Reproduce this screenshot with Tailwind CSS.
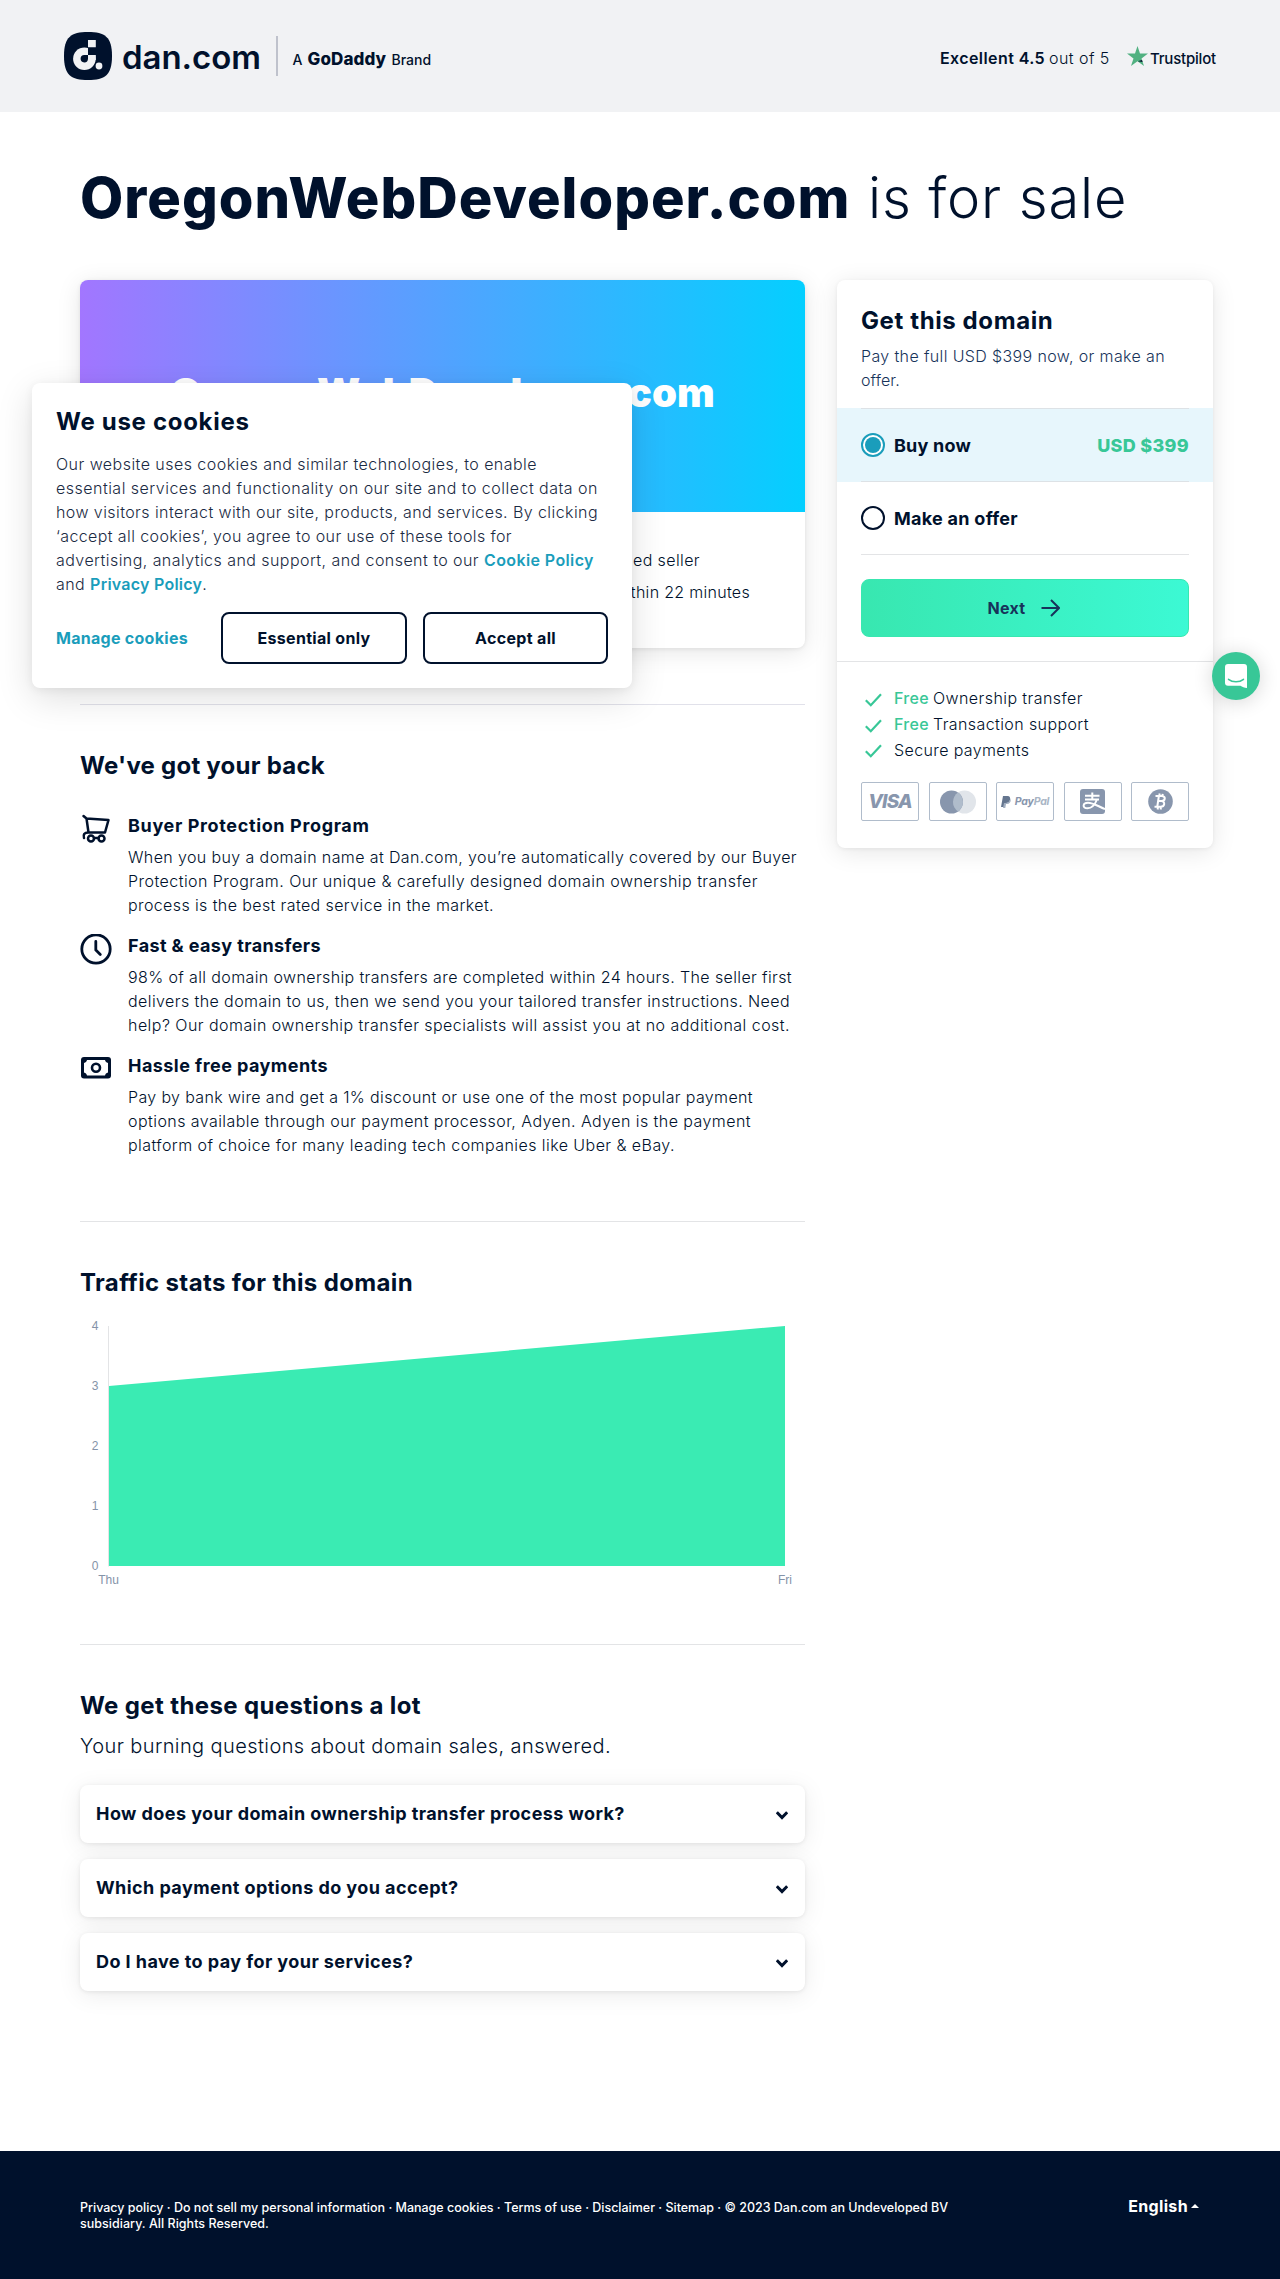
<!DOCTYPE html>
<html lang="en">
<head>
<meta charset="utf-8">
<title>OregonWebDeveloper.com is for sale</title>
<script src="https://cdn.jsdelivr.net/npm/@tailwindcss/browser@4"></script>
</head>
<body class="relative w-[1280px] bg-white font-['Inter',sans-serif] text-[#00112c]">

<header class="flex h-28 items-center justify-between bg-[#f1f2f4] pl-16 pr-[63px]">
  <div class="flex h-12 items-center">
    <svg class="size-12 shrink-0" viewBox="0 0 48 48">
      <path d="M24 0C41 0 48 5 48 24S41 48 24 48 0 43 0 24 7 0 24 0Z" fill="#00112c"/>
      <circle cx="20.4" cy="26.7" r="11.3" fill="#f1f2f4"/>
      <path d="M24 8h7.8v7.5H24z" fill="#f1f2f4"/>
      <path d="M24 15.5h8V23h-8z" fill="#00112c"/>
      <path d="M24 23h7.8v5H24z" fill="#f1f2f4"/>
      <path d="M20.4 23H24v3.8a3.7 3.7 0 1 1-3.6-3.8Z" fill="#00112c"/>
      <circle cx="35" cy="34" r="4.6" fill="#00112c"/>
      <circle cx="35" cy="34" r="3.4" fill="#f1f2f4"/>
    </svg>
    <span class="ml-[10px] mt-[2px] w-[154px] whitespace-nowrap text-[33px] leading-[48px] font-semibold tracking-[-0.05px]">dan.com</span>
    <span class="-mt-px h-10 w-[1.5px] bg-[#bfc2cc]"></span>
    <span class="ml-[15px] mt-[6px] flex items-baseline whitespace-nowrap leading-6">
      <span class="w-[15px] text-[14px] font-medium">A</span>
      <span class="w-[84px] text-[17px] font-extrabold tracking-[0.1px]">GoDaddy</span>
      <span class="text-[14px] font-medium">Brand</span>
    </span>
  </div>
  <div class="mt-1 flex items-center whitespace-nowrap leading-6">
    <span class="w-[109px] font-semibold tracking-[0.41px]">Excellent 4.5</span>
    <span class="w-[78px] font-light tracking-[0.45px]">out of 5</span>
    <svg class="-mt-1 mr-[2px] size-[21px]" viewBox="0 0 21 21">
      <path d="M10.5 0l2.5 7.6H21l-6.5 4.8L17 20l-6.500-4.700L4 20l2.500-7.600L0 7.600h8z" fill="#51b181"/>
      <path d="M15 14l.6 1.900-4.800-.6z" fill="#00112c"/>
    </svg>
    <span class="mt-px w-[67px] text-[15px] font-medium tracking-[-0.2px]">Trustpilot</span>
  </div>
</header>

<main class="px-20 pt-[54px]">
  <h1 class="flex whitespace-nowrap text-[56px] leading-[64px]">
    <span class="w-[788px] font-extrabold tracking-[1.03px]">OregonWebDeveloper.com</span>
    <span class="font-light tracking-[0.85px]">is for sale</span>
  </h1>

  <div class="mt-[50px] flex items-start">
    <div class="w-[725px] shrink-0">
      <section class="h-[368px] overflow-hidden rounded-lg shadow-[0_4px_24px_rgba(0,0,0,0.10),0_1px_4px_rgba(0,0,0,0.08)]">
        <div class="flex h-[232px] items-center justify-center bg-linear-to-r/srgb from-[#a276ff] to-[#04cfff] pb-[6px] text-[40px] leading-[48px] font-black tracking-[0.1px] text-white">OregonWebDeveloper.com</div>
        <div class="pt-9 text-right font-light leading-6">
          <p class="w-[620px] tracking-[0.4px]">Dan.com verified seller</p>
          <p class="mt-2 w-[670px] tracking-[0.3px]">Responds within 22 minutes</p>
        </div>
      </section>

      <section class="mt-14 border-t border-[#e1e1ea] pt-[45px]">
        <h2 class="text-2xl font-bold tracking-[0.24px]">We've got your back</h2>
        <div class="mt-8 flex flex-col gap-[17px] whitespace-nowrap text-base font-light">
          <div class="flex">
            <svg class="w-8 shrink-0 mr-4 h-8" viewBox="0 0 32 32" fill="none" stroke="#00112c" stroke-width="2.500" stroke-linejoin="round" stroke-linecap="round">
              <path d="M3.500 2l3 2.500L28.500 6 25 18.500H8.500L6.500 4.500M8.500 18.500c-4.500 0-5.500 2-4.500 5.500"/>
              <circle cx="11" cy="24.500" r="3"/><circle cx="21.500" cy="24.500" r="3"/><path d="M14 24h4.500"/>
            </svg>
            <div>
              <h3 class="text-lg leading-6 font-bold tracking-[0.64px]">Buyer Protection Program</h3>
              <p class="mt-[7px] tracking-[0.387px]">When you buy a domain name at Dan.com, you’re automatically covered by our Buyer</p>
              <p class="tracking-[0.462px]">Protection Program. Our unique &amp; carefully designed domain ownership transfer</p>
              <p class="tracking-[0.393px]">process is the best rated service in the market.</p>
            </div>
          </div>
          <div class="flex">
            <svg class="w-8 shrink-0 mr-4 h-8" viewBox="0 0 32 32" fill="none" stroke="#00112c" stroke-width="2.800" stroke-linecap="round">
              <circle cx="16" cy="15" r="14.200"/><path d="M15.800 7.500v8.500l4.500 4.500"/>
            </svg>
            <div>
              <h3 class="text-lg leading-6 font-bold tracking-[0.387px]">Fast &amp; easy transfers</h3>
              <p class="mt-[7px] tracking-[0.377px]">98% of all domain ownership transfers are completed within 24 hours. The seller first</p>
              <p class="tracking-[0.415px]">delivers the domain to us, then we send you your tailored transfer instructions. Need</p>
              <p class="tracking-[0.46px]">help? Our domain ownership transfer specialists will assist you at no additional cost.</p>
            </div>
          </div>
          <div class="flex">
            <svg class="w-8 shrink-0 mr-4 h-8" viewBox="0 0 32 32">
              <rect x="1" y="3" width="30" height="21.500" rx="3" fill="#00112c"/>
              <path d="M7 6h18c.3 1.600 1.400 2.600 3 3v9.500c-1.600.4-2.700 1.400-3 3H7c-.3-1.600-1.400-2.600-3-3V9c1.600-.4 2.700-1.400 3-3Z" fill="#fff"/>
              <circle cx="16" cy="13.800" r="4" fill="none" stroke="#00112c" stroke-width="2.600"/>
            </svg>
            <div>
              <h3 class="text-lg leading-6 font-bold tracking-[0.445px]">Hassle free payments</h3>
              <p class="mt-[7px] tracking-[0.359px]">Pay by bank wire and get a 1% discount or use one of the most popular payment</p>
              <p class="tracking-[0.438px]">options available through our payment processor, Adyen. Adyen is the payment</p>
              <p class="tracking-[0.441px]">platform of choice for many leading tech companies like Uber &amp; eBay.</p>
            </div>
          </div>
        </div>
      </section>

      <section class="mt-16 border-t border-[#e3e4e6] pt-[45px]">
        <h2 class="text-2xl font-bold tracking-[0.364px]">Traffic stats for this domain</h2>
        <svg class="h-[345px] w-[725px]" viewBox="0 1 725 345" fill="#8493a8" font-family="Liberation Sans, sans-serif" font-size="12">
          <path d="M28.500 28v240.500" stroke="#e3e4e6" fill="none"/>
          <path d="M29 88L705 28V268H29Z" fill="#3aebb3"/>
          <g text-anchor="end">
            <text x="18.500" y="32">4</text><text x="18.500" y="92">3</text><text x="18.500" y="152">2</text><text x="18.500" y="212">1</text><text x="18.500" y="272">0</text>
          </g>
          <g text-anchor="middle"><text x="28.500" y="286">Thu</text><text x="705" y="286">Fri</text></g>
        </svg>
      </section>

      <section class="border-t border-[#e3e4e6] pt-[45px]">
        <h2 class="text-2xl font-bold tracking-[0.369px]">We get these questions a lot</h2>
        <p class="mt-3 text-xl leading-6 font-light tracking-[0.407px]">Your burning questions about domain sales, answered.</p>
        <div class="mt-[27px] flex flex-col gap-4 text-lg font-bold tracking-[0.43px]">
          <div class="flex h-[58px] items-center justify-between rounded-lg bg-white pl-4 pr-[17px] shadow-[0_4px_24px_rgba(0,0,0,0.08),0_1px_4px_rgba(0,0,0,0.08)]">
            <span>How does your domain ownership transfer process work?</span>
            <svg class="mt-[3px] h-[9px] w-3" viewBox="0 0 12 9" fill="none" stroke="#00112c" stroke-width="3"><path d="M.8 1.200L6 6.600l5.200-5.400"/></svg>
          </div>
          <div class="flex h-[58px] items-center justify-between rounded-lg bg-white pl-4 pr-[17px] shadow-[0_4px_24px_rgba(0,0,0,0.08),0_1px_4px_rgba(0,0,0,0.08)]">
            <span>Which payment options do you accept?</span>
            <svg class="mt-[3px] h-[9px] w-3" viewBox="0 0 12 9" fill="none" stroke="#00112c" stroke-width="3"><path d="M.8 1.200L6 6.600l5.200-5.400"/></svg>
          </div>
          <div class="flex h-[58px] items-center justify-between rounded-lg bg-white pl-4 pr-[17px] shadow-[0_4px_24px_rgba(0,0,0,0.08),0_1px_4px_rgba(0,0,0,0.08)]">
            <span>Do I have to pay for your services?</span>
            <svg class="mt-[3px] h-[9px] w-3" viewBox="0 0 12 9" fill="none" stroke="#00112c" stroke-width="3"><path d="M.8 1.200L6 6.600l5.200-5.400"/></svg>
          </div>
        </div>
      </section>
    </div>

    <aside class="ml-8 h-[568px] w-[376px] shrink-0 rounded-lg bg-white pt-[25px] shadow-[0_4px_24px_rgba(0,0,0,0.10),0_1px_4px_rgba(0,0,0,0.06)]">
      <div class="px-6">
        <h2 class="text-2xl font-bold tracking-[0.6px]">Get this domain</h2>
        <p class="mt-[7px] font-light leading-6 tracking-[0.369px] text-[#17335a]">Pay the full USD $399 now, or make an<br><span class="tracking-[0.1px]">offer.</span></p>
      </div>
      <div class="mt-4 bg-[#e7f6fc] px-6 text-lg leading-6 font-bold">
        <div class="flex h-[74px] items-center border-y border-[#dde2e6]">
          <svg class="size-6" viewBox="0 0 24 24"><circle cx="12" cy="12" r="11" fill="#fff" stroke="#1a9dbb" stroke-width="2"/><circle cx="12" cy="12" r="8" fill="#1a9dbb"/></svg>
          <span class="ml-[9px] mt-px tracking-[0.2px]">Buy now</span>
          <span class="ml-auto mt-px tracking-[0.3px] font-extrabold text-[#38c797]">USD $399</span>
        </div>
      </div>
      <div class="px-6">
        <div class="flex h-[73px] items-center border-b border-[#e3e4e6] text-lg font-bold">
          <svg class="size-6" viewBox="0 0 24 24"><circle cx="12" cy="12" r="11" fill="#fff" stroke="#00112c" stroke-width="2"/></svg>
          <span class="ml-[9px] mt-px tracking-[0.27px]">Make an offer</span>
        </div>
        <div class="mt-6 flex h-[58px] items-center justify-center rounded-lg border border-[#38e7b0] bg-linear-to-r/srgb from-[#38e7b0] to-[#3cf9d4] font-bold text-[#17335a]">
          <span class="tracking-[0.3px]">Next</span>
          <svg class="ml-4 mr-[2px] h-[18px] w-[19px]" viewBox="0 0 19 18" fill="none" stroke="#17335a" stroke-width="2"><path d="M.5 9h17M10 1l8 8-8 8"/></svg>
        </div>
      </div>
      <div class="mt-6 border-t border-[#e3e4e6] px-6 pt-[23px] font-light leading-[26px]">
        <div class="flex items-center">
          <svg class="ml-1 mr-3 mt-1 h-[14px] w-[17px]" viewBox="0 0 17 14" fill="none" stroke="#38c797" stroke-width="2.200"><path d="M.8 7.200l5 5L16 1.200"/></svg>
          <span class="w-[39px] font-medium tracking-[0.3px] text-[#38c797]">Free</span><span class="tracking-[0.42px]">Ownership transfer</span>
        </div>
        <div class="flex items-center">
          <svg class="ml-1 mr-3 mt-1 h-[14px] w-[17px]" viewBox="0 0 17 14" fill="none" stroke="#38c797" stroke-width="2.200"><path d="M.8 7.200l5 5L16 1.200"/></svg>
          <span class="w-[39px] font-medium tracking-[0.3px] text-[#38c797]">Free</span><span class="tracking-[0.4px]">Transaction support</span>
        </div>
        <div class="flex items-center">
          <svg class="ml-1 mr-3 mt-px h-[14px] w-[17px]" viewBox="0 0 17 14" fill="none" stroke="#38c797" stroke-width="2.200"><path d="M.8 7.200l5 5L16 1.200"/></svg>
          <span class="tracking-[0.38px]">Secure payments</span>
        </div>
        <div class="mt-[19px] flex justify-between text-[#8896ad]">
          <div class="flex h-[39px] w-[58px] items-center justify-center rounded-[2px] border border-[#b0bccb] text-[19px] font-extrabold italic tracking-[-0.8px]">VISA</div>
          <div class="flex h-[39px] w-[58px] items-center justify-center rounded-[2px] border border-[#b0bccb]">
            <svg class="h-6 w-9" viewBox="0 0 36 24"><circle cx="24.500" cy="12" r="11.500" fill="#e1e5ea"/><circle cx="11.500" cy="12" r="11.500" fill="#8896ad"/><path d="M18 2.500a11.500 11.500 0 0 1 0 19 11.500 11.500 0 0 1 0-19Z" fill="#b0bccb"/></svg>
          </div>
          <div class="flex h-[39px] w-[58px] items-center justify-center rounded-[2px] border border-[#b0bccb] text-[10.500px] font-bold italic tracking-[-0.2px]">
            <svg class="mr-1 h-3 w-[10px]" viewBox="0 0 10 12"><path d="M2 0h4.500C9 0 9.500 2 9 4 8.500 6.500 6.500 7 4 7l-.8 4H0Z" fill="#65768f"/><path d="M9.300 2.500C10.500 5 9 8 6 8H5l-.7 4H2l1-5c4 0 5.800-1.200 6.300-4.500Z" fill="#a3b0c2"/></svg>
            <span>Pay</span><span class="text-[#a9b5c5]">Pal</span>
          </div>
          <div class="flex h-[39px] w-[58px] items-center justify-center rounded-[2px] border border-[#b0bccb]">
            <svg class="size-[25px]" viewBox="0 0 25 25" fill="none" stroke="#fff" stroke-width="2"><rect width="25" height="25" rx="3" fill="#8896ad" stroke="none"/><path d="M5 6.800h14.500M12.300 3.500v7M5 10.500h14M17 10.500c-2 5-5.500 8.800-9.500 8.800-5.500 0-5-5.600.5-5.600 5 0 10 3.500 17 6.300"/></svg>
          </div>
          <div class="flex h-[39px] w-[58px] items-center justify-center rounded-[2px] border border-[#b0bccb]">
            <svg class="size-[25px]" viewBox="0 0 25 25" fill="none" stroke="#fff" stroke-width="2"><circle cx="12.500" cy="12.500" r="12.300" fill="#8896ad" stroke="none"/><path d="M10.800 7.500L9.300 17.500M7.500 7h6.500c4 .5 3.500 5-.5 5h-3M13.500 12c4 .5 3.500 5.700-1 5.700H6.500M11.700 4.500l-.4 2.500M14.700 4.800L14.400 7M10 18l-.4 2.500M13 18l-.4 2.500"/></svg>
          </div>
        </div>
      </div>
    </aside>
  </div>
</main>

<footer class="mt-40 flex h-32 justify-between bg-[#00112c] pl-20 pr-[81px] text-white">
  <p class="whitespace-nowrap pt-[49px] text-[12.500px] leading-4 font-medium tracking-[-0.005px]">Privacy policy · Do not sell my personal information · Manage cookies · Terms of use · Disclaimer · Sitemap · © 2023 Dan.com an Undeveloped BV<br><span class="tracking-[0.03px]">subsidiary. All Rights Reserved.</span></p>
  <div class="box-content flex h-6 items-center pt-[43px] font-bold leading-6 tracking-[0.35px]">English<svg class="ml-[3px] h-1 w-2" viewBox="0 0 8 4"><path d="M0 4l4-4 4 4Z" fill="#fff"/></svg></div>
</footer>

<div class="absolute left-8 top-[383px] h-[305px] w-[600px] whitespace-nowrap rounded-lg bg-white px-6 pt-[23px] shadow-[0_10px_36px_rgba(0,0,0,0.13),0_2px_10px_rgba(0,0,0,0.06)]">
  <h2 class="text-2xl font-bold tracking-[0.7px]">We use cookies</h2>
  <div class="mt-[14px] font-light leading-6 text-[#1a2a43]">
    <p class="tracking-[0.457px]">Our website uses cookies and similar technologies, to enable</p>
    <p class="tracking-[0.482px]">essential services and functionality on our site and to collect data on</p>
    <p class="tracking-[0.421px]">how visitors interact with our site, products, and services. By clicking</p>
    <p class="tracking-[0.392px]">‘accept all cookies’, you agree to our use of these tools for</p>
    <p class="tracking-[0.441px]">advertising, analytics and support, and consent to our <a class="font-semibold tracking-[0.39px] text-[#1a9dbb]">Cookie Policy</a></p>
    <p class="tracking-[0.441px]">and <a class="font-semibold tracking-[0.24px] text-[#1a9dbb]">Privacy Policy</a>.</p>
  </div>
  <div class="mt-4 flex h-[52px] items-center font-bold">
    <span class="w-[165px] shrink-0 tracking-[0.28px] text-[#1a9dbb]">Manage cookies</span>
    <span class="flex h-full w-[186px] shrink-0 items-center justify-center rounded-lg border-2 border-[#00112c] tracking-[0.3px]">Essential only</span>
    <span class="ml-4 flex h-full w-[185px] shrink-0 items-center justify-center rounded-lg border-2 border-[#00112c] tracking-[0.33px]">Accept all</span>
  </div>
</div>

<div class="absolute left-[1212px] top-[652px] flex size-12 items-center justify-center rounded-full bg-[#38c797] shadow-[0_2px_20px_rgba(0,0,0,0.16)]">
  <svg class="h-6 w-[22px]" viewBox="0 0 22 24"><path d="M3 0h16a3 3 0 0 1 3 3v21c-2.500 0-5-1-6.500-2.200H3a3 3 0 0 1-3-3V3a3 3 0 0 1 3-3Z" fill="#fff"/><path d="M3.500 15.300c4 3.300 11 3.300 15 0" fill="none" stroke="#38c797" stroke-width="1.500" stroke-linecap="round"/></svg>
</div>
</body>
</html>
